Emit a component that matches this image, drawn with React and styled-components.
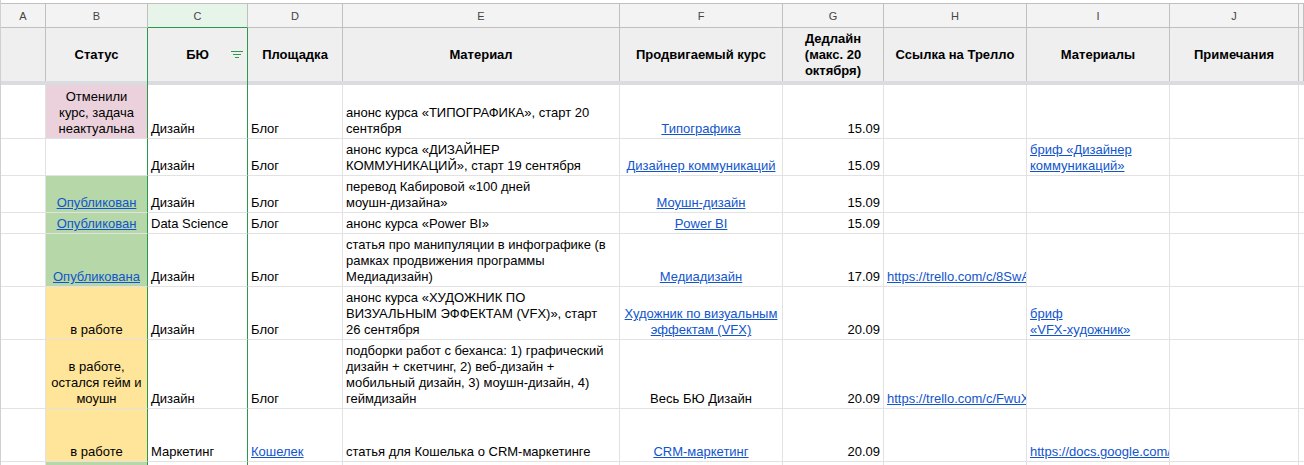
import React from "react";
import styled, { createGlobalStyle, css } from "styled-components";

//css section
const GlobalStyle = createGlobalStyle`
  body {
    margin: 0;
    background: #fff;
    overflow: hidden;
    font-family: "Liberation Sans", Arial, sans-serif;
  }
`;

const COLS = "45px 102px 100px 95px 277px 163px 101px 143px 143px 129px 1fr";
const GREEN = "#2a9a4a";

const Sheet = styled.div`
  padding-top: 3px;
  width: 1303px;
  border-left: 1px solid #d0d0d0;
`;

const Row = styled.div`
  display: grid;
  grid-template-columns: ${COLS};
  height: ${(p) => p.$h}px;
`;

// column C is outlined in green: its own right border and the right border of B
const edge = css`
  border-right-color: ${GREEN};
`;

const LetterCell = styled.div`
  box-sizing: border-box;
  border-top: 1px solid #c0c0c0;
  border-right: 1px solid #c0c0c0;
  border-bottom: 1px solid #c0c0c0;
  background: #f3f3f3;
  color: #444;
  font-size: 11px;
  display: flex;
  align-items: center;
  justify-content: center;
  ${(p) =>
    p.$active &&
    css`
      background: #e6f4ea;
      border-bottom-color: ${GREEN};
    `}
`;

const HeadCell = styled.div`
  box-sizing: border-box;
  position: relative;
  border-right: 1px solid #c0c0c0;
  background: #efefef;
  color: #000;
  font-size: 13px;
  font-weight: bold;
  line-height: 16px;
  white-space: pre-line;
  text-align: center;
  display: flex;
  align-items: center;
  justify-content: center;
  ${(p) => p.$edge && edge}
`;

const Divider = styled.div`
  height: 4px;
  background: #dadce0;
  display: grid;
  grid-template-columns: ${COLS};
`;

const DividerPart = styled.div`
  border-right: 1px solid transparent;
  ${(p) => p.$edge && edge}
`;

const Cell = styled.div`
  box-sizing: border-box;
  border-right: 1px solid #e2e2e2;
  border-bottom: 1px solid #e2e2e2;
  background: ${(p) => p.$bg || "#fff"};
  color: #000;
  font-size: 13px;
  line-height: 16px;
  padding: 0 3px 1px;
  display: flex;
  flex-direction: column;
  justify-content: flex-end;
  text-align: ${(p) => p.$align || "left"};
  white-space: pre;
  overflow: hidden;
  ${(p) => p.$edge && edge}
`;

const Link = styled.a`
  color: #1155cc;
  text-decoration: underline;
  cursor: pointer;
`;

const FilterBtn = styled.svg`
  position: absolute;
  right: 4px;
  top: 50%;
  margin-top: -4px;
`;

const FilterIcon = () => (
  <FilterBtn width="12" height="7" viewBox="0 0 12 7">
    <rect x="0" y="0" width="12" height="1" fill={GREEN} />
    <rect x="2" y="3" width="8" height="1" fill={GREEN} />
    <rect x="4" y="6" width="4" height="1" fill={GREEN} />
  </FilterBtn>
);

const PINK = "#ead1dc";
const GREENBG = "#b6d7a8";
const YELLOW = "#ffe599";

const letters = ["A", "B", "C", "D", "E", "F", "G", "H", "I", "J", ""];
const headers = [
  "",
  "Статус",
  "БЮ",
  "Площадка",
  "Материал",
  "Продвигаемый курс",
  "Дедлайн\n(макс. 20\nоктября)",
  "Ссылка на Трелло",
  "Материалы",
  "Примечания",
  "",
];

// cell: text, or { t, link, bg }
const rows = [
  {
    h: 54,
    cells: [
      "",
      { t: "Отменили\nкурс, задача\nнеактуальна", bg: PINK },
      "Дизайн",
      "Блог",
      "анонс курса «ТИПОГРАФИКА», старт 20\nсентября",
      { t: "Типографика", link: true },
      "15.09",
      "",
      "",
      "",
      "",
    ],
  },
  {
    h: 37,
    cells: [
      "",
      "",
      "Дизайн",
      "Блог",
      "анонс курса «ДИЗАЙНЕР\nКОММУНИКАЦИЙ», старт 19 сентября",
      { t: "Дизайнер коммуникаций", link: true },
      "15.09",
      "",
      { t: "бриф «Дизайнер\nкоммуникаций»", link: true },
      "",
      "",
    ],
  },
  {
    h: 37,
    cells: [
      "",
      { t: "Опубликован", link: true, bg: GREENBG },
      "Дизайн",
      "Блог",
      "перевод Кабировой «100 дней\nмоушн-дизайна»",
      { t: "Моушн-дизайн", link: true },
      "15.09",
      "",
      "",
      "",
      "",
    ],
  },
  {
    h: 21,
    cells: [
      "",
      { t: "Опубликован", link: true, bg: GREENBG },
      "Data Science",
      "Блог",
      "анонс курса «Power BI»",
      { t: "Power BI", link: true },
      "15.09",
      "",
      "",
      "",
      "",
    ],
  },
  {
    h: 53,
    cells: [
      "",
      { t: "Опубликована", link: true, bg: GREENBG },
      "Дизайн",
      "Блог",
      "статья про манипуляции в инфографике (в\nрамках продвижения программы\nМедиадизайн)",
      { t: "Медиадизайн", link: true },
      "17.09",
      { t: "https://trello.com/c/8SwAk2Lp", link: true },
      "",
      "",
      "",
    ],
  },
  {
    h: 53,
    cells: [
      "",
      { t: "в работе", bg: YELLOW },
      "Дизайн",
      "Блог",
      "анонс курса «ХУДОЖНИК ПО\nВИЗУАЛЬНЫМ ЭФФЕКТАМ (VFX)», старт\n26 сентября",
      { t: "Художник по визуальным\nэффектам (VFX)", link: true },
      "20.09",
      "",
      { t: "бриф\n«VFX-художник»", link: true },
      "",
      "",
    ],
  },
  {
    h: 69,
    cells: [
      "",
      { t: "в работе,\nостался гейм и\nмоушн", bg: YELLOW },
      "Дизайн",
      "Блог",
      "подборки работ с беханса: 1) графический\nдизайн + скетчинг, 2) веб-дизайн +\nмобильный дизайн, 3) моушн-дизайн, 4)\nгеймдизайн",
      "Весь БЮ Дизайн",
      "20.09",
      { t: "https://trello.com/c/FwuXr7Qa", link: true },
      "",
      "",
      "",
    ],
  },
  {
    h: 53,
    cells: [
      "",
      { t: "в работе", bg: YELLOW },
      "Маркетинг",
      { t: "Кошелек", link: true },
      "статья для Кошелька о CRM-маркетинге",
      { t: "CRM-маркетинг", link: true },
      "20.09",
      "",
      { t: "https://docs.google.com/document", link: true },
      "",
      "",
    ],
  },
  {
    h: 21,
    cells: ["", { t: "", bg: GREENBG }, "", "", "", "", "", "", "", "", ""],
  },
];

// alignment per column
const aligns = ["left", "center", "left", "left", "left", "center", "right", "left", "left", "left", "left"];
const isEdge = (i) => i === 1 || i === 2;

function App() {
  return (
    <>
      <GlobalStyle />
      <Sheet>
        <Row $h={25}>
          {letters.map((l, i) => (
            <LetterCell key={i} $active={i === 2}>
              {l}
            </LetterCell>
          ))}
        </Row>
        <Row $h={53}>
          {headers.map((h, i) => (
            <HeadCell key={i} $edge={isEdge(i)}>
              {h}
              {i === 2 && <FilterIcon />}
            </HeadCell>
          ))}
        </Row>
        <Divider>
          {letters.map((l, i) => (
            <DividerPart key={i} $edge={isEdge(i)} />
          ))}
        </Divider>
        {rows.map((row, r) => (
          <Row $h={row.h} key={r}>
            {row.cells.map((c, i) => {
              const cell = typeof c === "string" ? { t: c } : c;
              return (
                <Cell key={i} $bg={cell.bg} $align={aligns[i]} $edge={isEdge(i)}>
                  <div>{cell.link ? <Link>{cell.t}</Link> : cell.t}</div>
                </Cell>
              );
            })}
          </Row>
        ))}
      </Sheet>
    </>
  );
}

export default App;
